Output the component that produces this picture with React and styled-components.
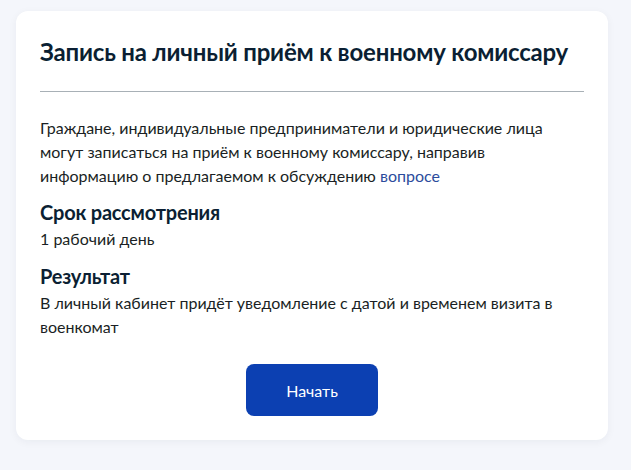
import React from 'react';
import styled, { createGlobalStyle } from 'styled-components';

const GlobalStyle = createGlobalStyle`
  html, body {
    margin: 0;
    padding: 0;
    background: #f4f6fb;
  }
  body {
    font-family: Lato, "Noto Sans", sans-serif;
    color: #0b1f33;
  }
`;

const Page = styled.div`
  padding: 11px 23px 30px 16px;
`;

const Card = styled.section`
  background: #ffffff;
  border-radius: 12px;
  box-shadow: 0 2px 8px rgba(11, 31, 51, 0.05);
  padding: 26px 24px 24px 24px;
  display: flex;
  flex-direction: column;
`;

const Title = styled.h1`
  margin: 0;
  font-size: 24px;
  font-weight: 700;
  line-height: 30px;
  letter-spacing: -0.2px;
  color: #0b1f33;
`;

const Divider = styled.hr`
  border: none;
  border-top: 1px solid #a8b0b6;
  margin: 24px 0 24px 0;
`;

const Text = styled.p`
  margin: 0;
  font-size: 16px;
  line-height: 24px;
  color: #1a1f24;
`;

const Link = styled.a`
  color: #2b4c9c;
  text-decoration: none;
`;

const Heading = styled.h2`
  margin: ${p => p.$first ? '11px' : '12px'} 0 2px 0;
  font-size: 20px;
  font-weight: 700;
  line-height: 26px;
  letter-spacing: -0.2px;
  color: #0b1f33;
`;

const Actions = styled.div`
  display: flex;
  justify-content: center;
  margin-top: 25px;
`;

const Button = styled.button`
  width: 132px;
  height: 52px;
  border: none;
  border-radius: 8px;
  background: #0c40b2;
  color: #ffffff;
  font-family: Lato, "Noto Sans", sans-serif;
  font-size: 16px;
  font-weight: 400;
  cursor: pointer;
`;

export default function App() {
  return (
    <>
      <GlobalStyle />
      <Page>
        <Card>
          <Title>Запись на личный приём к военному комиссару</Title>
          <Divider />
          <Text>
            Граждане, индивидуальные предприниматели и юридические лица могут записаться
            на приём к военному комиссару, направив информацию о предлагаемом к обсуждению{' '}
            <Link href="#">вопросе</Link>
          </Text>
          <Heading $first>Срок рассмотрения</Heading>
          <Text>1 рабочий день</Text>
          <Heading>Результат</Heading>
          <Text>В личный кабинет придёт уведомление с датой и временем визита в военкомат</Text>
          <Actions>
            <Button>Начать</Button>
          </Actions>
        </Card>
      </Page>
    </>
  );
}
